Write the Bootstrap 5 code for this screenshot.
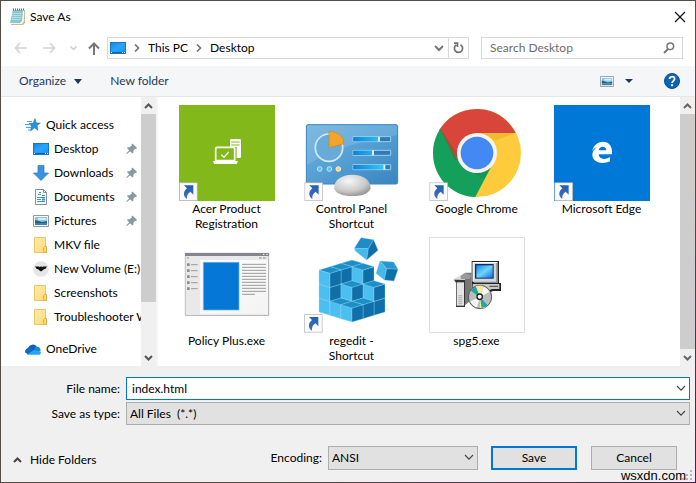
<!DOCTYPE html>
<html lang="en">
<head>
<meta charset="utf-8">
<meta name="viewport" content="width=device-width, initial-scale=1">
<title>Save As</title>
<link href="https://cdn.jsdelivr.net/npm/bootstrap@5.3.0/dist/css/bootstrap.min.css" rel="stylesheet">
<style>
  body { font-family: Lato, "Open Sans", sans-serif; font-size: 12px; line-height: 16px; color: #000; background: #fff; }
  button, input, select { font: inherit; color: inherit; }
  svg { display: block; flex: none; }
  .dialog { height: 100vh; min-height: 420px; border: 1px solid #544c47; border-image: linear-gradient(to bottom right, #544c47 70%, #48204f) 1; }
  .bare { border: 0; background: none; padding: 0; color: inherit; text-align: left; }
  .titlebar { height: 31px; padding: 0 9px 0 8px; }
  .address-row { height: 34px; padding: 5px 12px 7px 13px; }
  .history { gap: 16px; margin-right: 14px; }
  .go-up { margin: 0 7px 0 11px; }
  .path-box, .search-box { border: 1px solid #d9d9d9; height: 22px; }
  .path-box { gap: 8px; padding-left: 2px; }
  .search-box { width: 202px; margin-left: 12px; padding: 0 7px 0 8px; }
  .search-box input { border: 0; outline: 0; min-width: 0; padding: 0; }
  .search-box input::placeholder { color: #6d6d6d; opacity: 1; }
  .refresh { width: 20px; border-left: 1px solid #d9d9d9; height: 20px; }
  .toolbar { height: 31px; background: #f5f6f7; border-bottom: 1px solid #e6e7e8; color: #1e395b; padding: 0 15px 0 18px; }
  .new-folder { margin-left: 28px; }
  .browser { min-height: 0; }
  .tree { width: 140px; padding-top: 16px; }
  .tree a { height: 24px; color: inherit; text-decoration: none; white-space: nowrap; padding-left: 32px; gap: 5px; }
  .tree a.top-item { padding-left: 24px; }
  .tree a.later { margin-top: 8px; }
  .tree .pin { margin-left: auto; margin-right: 4px; }
  .scroll { width: 15px; background: #f0f0f0; }
  .scroll .knob { background: #cdcdcd; }
  .scroll .knob.partial { height: 70%; }
  .scroll .cap { height: 17px; }
  .splitter { width: 4px; border-left: 2px solid #f5f5f5; }
  .files { display: grid; grid-template-columns: repeat(auto-fill, 125px); grid-auto-rows: 132px; align-content: start; padding: 8px 0 0 4px; }
  .file { color: inherit; text-decoration: none; line-height: 15px; text-align: center; }
  .file svg { width: 96px; height: 96px; margin: 0 auto; }
  .file span { display: block; padding: 0 18px; }
  .footer { background: #f0f0f0; padding: 11px 5px 12px 12px; }
  .form-line { margin-bottom: 2px; }
  .form-line label { width: 107px; text-align: right; margin-right: 6px; }
  .combo { position: relative; height: 23px; }
  .combo > svg { position: absolute; right: 4px; top: 8px; pointer-events: none; }
  .combo select { appearance: none; width: 100%; height: 100%; border: 1px solid #adadad; border-radius: 0; background: #e1e1e1; padding: 0 3px; display: block; }
  .combo input { width: 100%; height: 100%; border: 1px solid #0078d7; outline: 0; background: #fff; padding: 0 5px; display: block; }
  .combo.encoding { width: 150px; height: 24px; margin: 0 13px 0 6px; }
  .actions { margin-top: 21px; padding-right: 13px; }
  .push { width: 86px; height: 24px; border: 1px solid #adadad; border-radius: 0; background: #e1e1e1; padding: 0; line-height: 16px; font-size: 12px; color: #000; }
  .push.main { border: 2px solid #0078d7; margin-right: 14px; }
  .credit { position: absolute; right: 9px; bottom: 0; line-height: 13px; font-family: "Liberation Sans", sans-serif; font-size: 13px; }
  .grip { position: absolute; right: 2px; bottom: 1px; }
</style>
<script src="https://cdn.jsdelivr.net/npm/bootstrap@5.3.0/dist/js/bootstrap.bundle.min.js"></script>
</head>
<body>
<svg width="0" height="0" class="position-absolute" aria-hidden="true">
  <defs>
    <linearGradient id="gPc" x1="0" y1="0" x2="1" y2="1"><stop offset="0" stop-color="#1488ea"/><stop offset=".5" stop-color="#2aa4ff"/><stop offset="1" stop-color="#1b95f5"/></linearGradient>
    <linearGradient id="gPanel" x1="0" y1="0" x2="1" y2="1"><stop offset="0" stop-color="#74b3dd"/><stop offset=".5" stop-color="#559fd3"/><stop offset="1" stop-color="#3a84c0"/></linearGradient>
    <linearGradient id="gBar"><stop offset="0" stop-color="#0c84d8"/><stop offset="1" stop-color="#35c5ff"/></linearGradient>
    <radialGradient id="gDome" cx=".4" cy=".3" r=".8"><stop offset="0" stop-color="#f7f7f7"/><stop offset=".6" stop-color="#c9c9c9"/><stop offset="1" stop-color="#858585"/></radialGradient>
    <linearGradient id="gArrow" x1="0" y1="0" x2="0" y2="1"><stop offset="0" stop-color="#2560b4"/><stop offset="1" stop-color="#3c6fb8"/></linearGradient>
    <linearGradient id="gFolder" x1="0" y1="0" x2="1" y2="1"><stop offset="0" stop-color="#ffeaa5"/><stop offset="1" stop-color="#fbdc7e"/></linearGradient>
    <linearGradient id="gScreen" x1="0" y1="0" x2="1" y2="1"><stop offset="0" stop-color="#1488e8"/><stop offset=".5" stop-color="#6fd6fa"/><stop offset="1" stop-color="#1270e0"/></linearGradient>
    <linearGradient id="gPaper" x1="0" y1="0" x2="1" y2="1"><stop offset="0" stop-color="#fff"/><stop offset="1" stop-color="#f3f3f3"/></linearGradient>
    <symbol id="monitor" viewBox="0 0 16 12"><path fill="#1678be" d="M0 0h16v12H0z"/><path fill="url(#gPc)" d="M1 1h14v9H1z"/><path fill="#0b62a8" d="M1 10h14v1H1z"/><path fill="#fff" d="M1 10h1v1H1zM12 10h1v1h-1zM14 10h1v1h-1z"/></symbol>
    <symbol id="photo" viewBox="0 0 16 12"><path fill="#fff" stroke="#8d99a5" d="M.5.5h15v11H.5z"/><path fill="#8cc5ec" d="M2 2h12v8H2z"/><path fill="#d8ecf8" d="M5 3h8v2H5z"/><path fill="#32606c" d="M2 5l4 1 3 1 5-1v2H2z"/><path fill="#3b80b5" d="M2 8h12v2H2z"/></symbol>
    <symbol id="folder" viewBox="0 0 14 16"><path fill="url(#gFolder)" stroke="#ecc65a" d="M.5.5h11v15H.5z"/><path fill="#f9d973" stroke="#e2b23e" d="M10.500 9.500h2v6h-3v-5z"/></symbol>
    <symbol id="pin" viewBox="0 0 12 12"><path fill="#8796a4" d="M7 0l5 5-1 1-1-.4L8 8v2L7 11 4.600 8.400 1 11.500.3 11l3.200-3.700L1 5l1-1h2l2.500-2L6 1z"/></symbol>
    <symbol id="chevDown" viewBox="0 0 10 7"><path fill="none" stroke="#444" stroke-width="1.100" d="M1 1l4 4.200L9 1"/></symbol>
    <symbol id="shortcut" viewBox="0 0 56 56"><path fill="#fafafa" stroke="#b5b5b5" stroke-width="2.500" d="M1 1h54v54H1z"/><path fill="url(#gArrow)" d="M15 9h28v28l-9-9c-8 5-11 12-10 22-7-4-10-11-9-18 1-6 5-10 9-14z"/></symbol>
    <symbol id="cube" viewBox="0 0 68 66" overflow="visible"><g stroke="#a5dcf5" stroke-width="1" stroke-linejoin="round"><path fill="#4abff0" d="M1 12l33 10v42L1 54z"/><path fill="#0f6fa8" d="M34 22l33-10v42L34 64z"/><path fill="#1b8fc8" d="M34 2l33 10-33 10L1 12z"/></g></symbol>
  </defs>
</svg>

<div class="dialog d-flex flex-column position-relative overflow-hidden">
  <header class="titlebar d-flex flex-shrink-0 align-items-center justify-content-between">
    <div class="d-flex align-items-center gap-1">
      <svg width="17" height="17" viewBox="0 0 17 17"><path fill="#c9b98f" d="M4 2h12v13l-2 2H2z"/><path fill="#f5f5ee" d="M4 2h11v11l-2 3H2z"/><path fill="#89c5d2" d="M4 2h10l-1 11-2 2H1z"/><path stroke="#d1eef3" stroke-width=".6" d="M3.500 5.500h9M3 7.500h9M3 9.500h9M2.500 11.500h9"/><path stroke="#48747e" stroke-dasharray="1 1" stroke-width="2" d="M4 1.500h11"/></svg>
      <span>Save As</span>
    </div>
    <button class="bare" aria-label="Close"><svg width="12" height="12" viewBox="0 0 12 12"><path stroke="#111" stroke-width="1.200" d="M1 1l10 10M11 1L1 11"/></svg></button>
  </header>

  <div class="address-row d-flex flex-shrink-0 align-items-center">
    <div class="history d-flex align-items-center">
      <button class="bare" aria-label="Back"><svg width="13" height="12" viewBox="0 0 13 12"><path fill="none" stroke="#d4d4d4" stroke-width="1.600" d="M6 1L1.500 6 6 11M1.500 6H13"/></svg></button>
      <button class="bare" aria-label="Forward"><svg width="13" height="12" viewBox="0 0 13 12"><path fill="none" stroke="#d4d4d4" stroke-width="1.600" d="M7 1l4.500 5L7 11M11.500 6H0"/></svg></button>
    </div>
    <button class="bare" aria-label="Recent locations"><svg width="7" height="5" viewBox="0 0 7 5"><path fill="none" stroke="#ccc" stroke-width="1.500" d="M.5.5l3 3 3-3"/></svg></button>
    <button class="bare go-up" aria-label="Up"><svg width="12" height="13" viewBox="0 0 12 13"><path fill="none" stroke="#777" stroke-width="2" d="M1 6.500l5-5 5 5M6 2v11"/></svg></button>
    <nav class="path-box d-flex align-items-center flex-grow-1" aria-label="Path">
      <svg width="16" height="12"><use href="#monitor"/></svg>
      <svg width="6" height="8" viewBox="0 0 6 8"><path fill="none" stroke="#777" stroke-width="1.700" d="M1 .5L4.500 4 1 7.500"/></svg>
      <button class="bare">This PC</button>
      <svg width="6" height="8" viewBox="0 0 6 8"><path fill="none" stroke="#777" stroke-width="1.700" d="M1 .5L4.500 4 1 7.500"/></svg>
      <button class="bare">Desktop</button>
      <div class="d-flex align-items-center ms-auto gap-1">
        <button class="bare" aria-label="Previous locations"><svg width="10" height="7" viewBox="0 0 10 7"><path fill="none" stroke="#777" stroke-width="2" d="M1 1l4 4 4-4"/></svg></button>
        <div class="refresh d-flex align-items-center justify-content-center"><button class="bare" aria-label="Refresh"><svg width="11" height="12" viewBox="0 0 11 12"><path fill="none" stroke="#707070" stroke-width="1.700" d="M7.500 2.700a4.100 4.100 0 1 1-4.300.2M1 1.200h3.500V5"/></svg></button></div>
      </div>
    </nav>
    <div class="search-box d-flex align-items-center">
      <input class="flex-grow-1" type="text" placeholder="Search Desktop" aria-label="Search Desktop">
      <svg width="12" height="12" viewBox="0 0 12 12"><circle cx="7.300" cy="4.300" r="3.300" fill="none" stroke="#777" stroke-width="1.500"/><path stroke="#777" stroke-width="2" d="M5 7L1 11"/></svg>
    </div>
  </div>

  <div class="toolbar d-flex flex-shrink-0 align-items-center">
    <button class="bare d-flex align-items-center gap-1">Organize <svg class="ms-1" width="8" height="5" viewBox="0 0 8 5"><path fill="#1e395b" d="M0 0h8L4 5z"/></svg></button>
    <button class="bare new-folder">New folder</button>
    <button class="bare ms-auto d-flex align-items-center" aria-label="Change view"><svg width="14" height="11" viewBox="0 0 16 12" preserveAspectRatio="none"><use href="#photo"/></svg><svg class="ms-2" width="14" height="4" viewBox="0 0 14 4"><path fill="#1e395b" d="M3 0h8L7 4z"/></svg></button>
    <button class="bare ms-4 ps-1" aria-label="Help"><svg width="16" height="16" viewBox="0 0 16 16"><circle cx="8" cy="8" r="7.500" fill="#0a63b5" stroke="#084f93"/><path fill="none" stroke="#fff" stroke-width="1.800" d="M5.600 6c0-3.200 5-3 5 0 0 1.800-2.500 1.900-2.500 4"/><path fill="#fff" d="M7.100 11.200h2v2h-2z"/></svg></button>
  </div>

  <main class="browser d-flex flex-grow-1">
    <nav class="tree d-flex flex-column overflow-hidden flex-shrink-0" aria-label="Places">
      <a href="#" class="d-flex align-items-center top-item"><svg width="16" height="14" viewBox="0 0 16 14"><path fill="#2a91dc" stroke="#1676bd" stroke-width=".6" d="M10 .7l1.300 4.300 4 .1-3.300 2.500 1 4.700L9.500 9.800 5.500 13l1-4.800L4 5.300h4z"/><path stroke="#44a5e8" d="M2 3.500h5M0 6.500h6M1 9.500h5M3 12h2"/></svg>Quick access</a>
      <a href="#" class="d-flex align-items-center"><svg width="16" height="12"><use href="#monitor"/></svg>Desktop<svg class="pin" width="11" height="12"><use href="#pin"/></svg></a>
      <a href="#" class="d-flex align-items-center"><svg width="16" height="16" viewBox="0 0 16 16"><path fill="#3a92e0" stroke="#2a78c6" stroke-width=".7" d="M5 .5h6V8h4.500L8 15.500.5 8H5z"/></svg>Downloads<svg class="pin" width="11" height="12"><use href="#pin"/></svg></a>
      <a href="#" class="d-flex align-items-center"><svg width="16" height="16" viewBox="0 0 16 16"><path fill="#fff" stroke="#85909a" d="M2.500.5h8l3 3v12h-11z"/><path fill="none" stroke="#85909a" d="M10.500.5v3h3"/><path stroke="#3791cc" d="M6 3.500h2M5 5.500h3M9 6.500h3M4 8.500h8M4 10.500h4M4 12.500h8"/><path fill="#3791cc" d="M9 9.500h3v2H9z"/></svg>Documents<svg class="pin" width="11" height="12"><use href="#pin"/></svg></a>
      <a href="#" class="d-flex align-items-center"><svg width="16" height="12"><use href="#photo"/></svg>Pictures<svg class="pin" width="11" height="12"><use href="#pin"/></svg></a>
      <a href="#" class="d-flex align-items-center"><svg width="16" height="16"><use href="#folder"/></svg>MKV file</a>
      <a href="#" class="d-flex align-items-center"><svg width="16" height="16" viewBox="0 0 16 16"><circle cx="8" cy="8" r="7.800" fill="#e5e5e5"/><path fill="#111" d="M2 5.500h4l1 .8.500-1 .5.500.5-.5.500 1 1-.8h4c-.5 1-1.500 1.500-1.500 2.500-1-.3-2 0-2.400 1L8 10.500 5.900 9C5.500 8 4.500 7.700 3.500 8c0-1-1-1.500-1.500-2.500z"/></svg>New Volume (E:)</a>
      <a href="#" class="d-flex align-items-center"><svg width="16" height="16"><use href="#folder"/></svg>Screenshots</a>
      <a href="#" class="d-flex align-items-center"><svg width="16" height="16"><use href="#folder"/></svg>Troubleshooter W</a>
      <a href="#" class="d-flex align-items-center top-item later"><svg width="16" height="11" viewBox="0 0 16 11"><path fill="#0a62b8" d="M3 4a5 5 0 0 1 9-1l-4 5-6 1z"/><path fill="#1784d8" d="M9 4.500c3-3.500 7-1 6.500 2.500L10 8z"/><path fill="#1268c2" d="M3.500 4C1 4-.3 6.500.2 8.300L3 10.500l6-4C7 4.500 5 4 3.500 4z"/><path fill="#2aa3ea" d="M2 10.500L9 6l6.700 1.500c.7 1.700-.7 3.300-2.300 3.300H3.500z"/></svg>OneDrive</a>
    </nav>
    <div class="scroll d-flex flex-column flex-shrink-0">
      <div class="cap d-flex align-items-center justify-content-center"><svg width="9" height="6" viewBox="0 0 9 6"><path fill="none" stroke="#555" stroke-width="2" d="M1 5l3.500-3.500L8 5"/></svg></div>
      <div class="knob partial"></div>
      <div class="cap mt-auto d-flex align-items-center justify-content-center"><svg width="9" height="6" viewBox="0 0 9 6"><path fill="none" stroke="#555" stroke-width="2" d="M1 1l3.500 3.500L8 1"/></svg></div>
    </div>
    <div class="splitter"></div>
    <section class="files flex-grow-1 overflow-hidden" aria-label="Files">
      <a class="file" href="#"><svg viewBox="27 21 288 288"><path fill="#83b81a" d="M27 21h288v288H27z"/><path fill="#fff" d="M180 127q0-4 4-4h25q4 0 4 4v49q0 4-4 4h-9v-33h-20z"/><path stroke="#83b81a" stroke-width="3" d="M184 132h25M184 141h25"/><path fill="#83b81a" stroke="#fff" stroke-width="5" d="M137 152q0-4 4-4h49q4 0 4 4v36h-57z"/><path fill="#fff" d="M129 189h75l-4 9h-68z"/><path fill="none" stroke="#fff" stroke-width="4" d="M154 170l8 8 14-16"/><use href="#shortcut" x="27" y="253" width="56" height="56"/></svg><span>Acer Product Registration</span></a>
      <a class="file" href="#"><svg viewBox="18 21 288 288"><rect x="25" y="80" width="274" height="178" rx="5" fill="url(#gPanel)" stroke="#3c86bd" stroke-width="3"/><path fill="#8fc6e9" opacity=".35" d="M27 82h270v30Q150 130 27 200z"/><circle cx="93" cy="149" r="41" fill="#68abd8" stroke="#d3eaf7" stroke-width="5"/><path fill="#f2a42c" stroke="#d18218" stroke-width="2" d="M93 149V99q45 5 45 38z"/><g fill="#3379b5" stroke="#9bd0ee" stroke-width="3"><path d="M165 116h113v15H165zM165 157h113v15H165zM165 200h113v15H165z"/></g><path fill="url(#gBar)" d="M166 117h76v13h-76zM166 158h58v13h-58zM166 201h90v13h-90z"/><path stroke="#d3f1ff" stroke-width="6" d="M243 116v15M225 157v15M259 200v15"/><circle cx="65" cy="213" r="7" fill="#52c3f1" stroke="#bfe8fa" stroke-width="3"/><circle cx="94" cy="213" r="7" fill="#52c3f1" stroke="#bfe8fa" stroke-width="3"/><circle cx="121" cy="213" r="7" fill="#ffd27c" stroke="#ffebc0" stroke-width="3"/><path fill="url(#gDome)" d="M108 270q3-38 55-40 52 2 55 40-8 24-55 24t-55-24z"/><use href="#shortcut" x="19" y="253" width="56" height="56"/></svg><span>Control Panel Shortcut</span></a>
      <a class="file" href="#"><svg viewBox="9 21 288 288"><circle cx="153" cy="165" r="132" fill="#fdcb3c"/><path fill="#d9453a" d="M39 97C63 58 105 33 153 33c50 0 93 28 116 72H153l-52 88z"/><path fill="#14a05b" d="M43 92l58 103c12 20 32 30 52 30l43-20-48 92C77 295 21 237 21 165c0-27 8-52 22-73z"/><path fill="#a42c25" opacity=".3" d="M43 92l44 96 13-6-8-17z"/><path fill="#0a7c43" opacity=".25" d="M110 208q40 24 86-1l-21 37z"/><path fill="#c88b10" opacity=".25" d="M160 105h109l-60 22z"/><circle cx="153" cy="165" r="60" fill="#f4f4f4"/><circle cx="153" cy="165" r="49" fill="#4488f3"/><use href="#shortcut" x="10" y="253" width="56" height="56"/></svg><span>Google Chrome</span></a>
      <a class="file" href="#"><svg viewBox="12 21 288 288"><path fill="#0078d8" d="M12 21h288v288H12z"/><path fill="#fff" d="M126 160c4-17 17-29 33-29 18 0 27 13 27 31v7h-40c1 16 20 17 34 8v13c-24 11-52 3-53-19 0-11 6-19 15-24-7 2-12 6-16 13zM146 157h23c0-14-21-15-23 0z"/><use href="#shortcut" x="13" y="253" width="56" height="56"/></svg><span>Microsoft Edge</span></a>
      <a class="file" href="#"><svg viewBox="27 15 288 288"><path fill="url(#gPaper)" stroke="#ababab" stroke-width="3" d="M46 64h250v186H46z"/><path fill="#83878b" d="M45 63h252v9H45z"/><path fill="#e9e9e9" d="M47 72h248v12H47zM47 84h44v165H47z"/><path stroke="#9a9a9a" stroke-width="3" d="M63 98h20M63 116h20M63 134h20M63 152h20M63 170h20M216 97h72M216 106h72M216 115h72M216 124h72M216 133h72M216 142h72M216 151h72M216 160h72M216 169h72M216 178h72M216 187h39"/><path stroke="#8e8e8e" stroke-width="8" stroke-dasharray="8 10" d="M55 94v85"/><path stroke="#aaa" stroke-width="5" d="M51 78h6M267 78h8M279 78h8"/><path stroke="#fff" stroke-width="3" d="M279 67h4M289 67h4"/><path fill="#0578d6" stroke="#76b5e8" stroke-width="2" d="M100 91h107v143H100z"/></svg><span>Policy Plus.exe</span></a>
      <a class="file" href="#"><svg viewBox="18 15 288 288"><path fill="#ddd" opacity=".7" d="M225 249l50-17-15-3z"/>
        <g>
          <use href="#cube" x="128" y="82" width="68" height="66"/><use href="#cube" x="95" y="134" width="68" height="66"/><use href="#cube" x="161" y="134" width="68" height="66"/><use href="#cube" x="95" y="92" width="68" height="66"/><use href="#cube" x="161" y="92" width="68" height="66"/>
          <use href="#cube" x="62" y="186" width="68" height="66"/><use href="#cube" x="194" y="186" width="68" height="66"/><use href="#cube" x="62" y="144" width="68" height="66"/><use href="#cube" x="62" y="102" width="68" height="66"/><use href="#cube" x="194" y="144" width="68" height="66"/><use href="#cube" x="128" y="144" width="68" height="66"/>
          <use href="#cube" x="95" y="196" width="68" height="66"/><use href="#cube" x="161" y="196" width="68" height="66"/><use href="#cube" x="128" y="206" width="68" height="66"/>
        </g>
        <g stroke="#8ed0ef" stroke-width="1" stroke-linejoin="round"><path fill="#1c8dc6" d="M189 17l38 6-16 27-42-1z"/><path fill="#45b9eb" d="M169 49l42 1-5 34-33-26z"/><path fill="#0f70a9" d="M227 23l13 32-34 29 5-34z"/>
        <path fill="#2399cf" d="M246 87l41 3 13 22-34-2z"/><path fill="#45b9eb" d="M246 87l20 23-7 34-25-20z"/><path fill="#0f70a9" d="M266 110l34 2-12 35-29-3z"/></g>
        <use href="#shortcut" x="18" y="246" width="56" height="56"/></svg><span>regedit - Shortcut</span></a>
      <a class="file" href="#"><svg viewBox="9 15 288 288"><path fill="#fff" stroke="#ddd" stroke-width="3" d="M10.500 16.500h285v285h-285z"/><path fill="#222" d="M137 87h82v66h6v24h-24l-8 4h-56z"/><path fill="#d6d6d6" d="M140 90h74v60h-74z"/><path fill="#fff" d="M140 90h74v3h-71v54h-3z"/><path fill="#888" d="M211 93h5v60h-72v-4h67z"/><path fill="#102a72" d="M147 96h56v44h-56z"/><path fill="url(#gScreen)" d="M151 100h49v37h-49z"/><path fill="#c8c8c8" d="M140 156h80v15h-22l-8 4h-50z"/><path stroke="#444" stroke-width="3" d="M190 163h26"/><path fill="#777" d="M117 122h20v80l-20 18z"/><path fill="#ddd" d="M82 141l35-18v10l-17 10H82z"/><path fill="#333" d="M84 143h33v82H90v-73z"/><path fill="#e5e5e5" d="M92 151h22v70H92z"/><path fill="#999" d="M104 132l12-9 20 6-5 12h-27z"/><path stroke="#aaa" stroke-width="12" stroke-dasharray="3 3" d="M103 190v31"/><circle cx="162" cy="195" r="35" fill="#b8bfbb" stroke="#555" stroke-width="3"/><path fill="#f1ec9b" d="M162 195l-13-32q15-6 24 1zM162 195l20 27q-10 9-20 6z"/><path fill="#1fa5a8" d="M162 195l-27-18q5-8 14-14zM162 195l5 33q10 0 17-8z"/><path fill="#f5f5f5" d="M162 195l11-31q12 4 17 16zM162 195l-29 13q5 14 20 18z"/><circle cx="161" cy="194" r="8" fill="#fff" stroke="#222" stroke-width="4"/></svg><span>spg5.exe</span></a>
    </section>
    <div class="scroll d-flex flex-column flex-shrink-0">
      <div class="cap d-flex align-items-center justify-content-center"><svg width="9" height="6" viewBox="0 0 9 6"><path fill="none" stroke="#666" stroke-width="2" d="M1 5l3.500-3.500L8 5"/></svg></div>
      <div class="knob flex-grow-1"></div>
      <div class="cap d-flex align-items-center justify-content-center"><svg width="9" height="6" viewBox="0 0 9 6"><path fill="none" stroke="#666" stroke-width="2" d="M1 1l3.500 3.500L8 1"/></svg></div>
    </div>
  </main>

  <form class="footer flex-shrink-0">
    <div class="form-line d-flex align-items-center">
      <label for="fileName">File name:</label>
      <div class="combo flex-grow-1"><input id="fileName" type="text" value="index.html"><svg width="10" height="7"><use href="#chevDown"/></svg></div>
    </div>
    <div class="form-line d-flex align-items-center">
      <label for="fileType">Save as type:</label>
      <div class="combo flex-grow-1"><select id="fileType"><option>All Files &nbsp;(*.*)</option></select><svg width="10" height="7"><use href="#chevDown"/></svg></div>
    </div>
    <div class="actions d-flex align-items-center">
      <button type="button" class="bare d-flex align-items-center gap-2 me-auto pt-1"><svg width="9" height="6" viewBox="0 0 9 6"><path fill="none" stroke="#444" stroke-width="2" d="M1 5l3.500-3.500L8 5"/></svg>Hide Folders</button>
      <label for="encoding">Encoding:</label>
      <div class="combo encoding"><select id="encoding"><option>ANSI</option></select><svg width="10" height="7"><use href="#chevDown"/></svg></div>
      <button type="button" class="btn push main">Save</button>
      <button type="button" class="btn push">Cancel</button>
    </div>
  </form>
  <svg class="grip" width="11" height="11" viewBox="0 0 11 11"><path fill="#b5b5b5" d="M8 0h2v2H8zM4 4h2v2H4zM8 4h2v2H8zM0 8h2v2H0zM4 8h2v2H4zM8 8h2v2H8z"/></svg>
  <span class="credit">wsxdn.com</span>
</div>
</body>
</html>
